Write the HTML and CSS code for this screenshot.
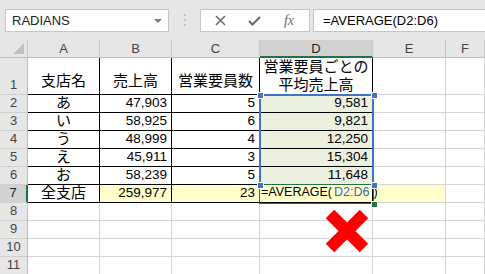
FILE: index.html
```html
<!DOCTYPE html>
<html lang="ja">
<head>
    <meta charset="UTF-8">
    <title>AVERAGE</title>
    <link rel="stylesheet" href="styles.css">
</head>
<body>
    <div class="toolbar">
        <div class="namebox"><span>RADIANS</span><span class="caret"></span></div>
        <div class="grip"><i></i><i></i><i></i></div>
        <div class="fbuttons">
            <span class="fbtn w1">
                <svg width="11" height="11" viewBox="0 0 11 11"><path d="M1 1L10 10M10 1L1 10" stroke="#6b6b6b" stroke-width="1.6" fill="none"/></svg>
            </span>
            <span class="fbtn w2">
                <svg width="13" height="10" viewBox="0 0 13 10"><path d="M1 5L4.5 8.5L12 1" stroke="#6b6b6b" stroke-width="2" fill="none"/></svg>
            </span>
            <span class="fbtn w3 fx">fx</span>
        </div>
        <div class="formula">=AVERAGE(D2:D6)</div>
    </div>

    <div class="sheet">
        <!-- column headers -->
        <div class="c h corner"><span class="tri"></span></div>
        <div class="c h">A</div>
        <div class="c h">B</div>
        <div class="c h">C</div>
        <div class="c h selcol">D</div>
        <div class="c h">E</div>
        <div class="c h">F</div>

        <!-- row 1 -->
        <div class="c rh">1</div>
        <div class="c bk mid">支店名</div>
        <div class="c bk mid">売上高</div>
        <div class="c bk mid">営業要員数</div>
        <div class="c bk wrap">営業要員ごとの<br>平均売上高</div>
        <div class="c"></div>
        <div class="c"></div>

        <div class="c rh">2</div>
        <div class="c bk ctr">あ</div>
        <div class="c bk n">47,903</div>
        <div class="c bk n">5</div>
        <div class="c bk n g">9,581</div>
        <div class="c"></div>
        <div class="c"></div>

        <div class="c rh">3</div>
        <div class="c bk ctr">い</div>
        <div class="c bk n">58,925</div>
        <div class="c bk n">6</div>
        <div class="c bk n g">9,821</div>
        <div class="c"></div>
        <div class="c"></div>

        <div class="c rh">4</div>
        <div class="c bk ctr">う</div>
        <div class="c bk n">48,999</div>
        <div class="c bk n">4</div>
        <div class="c bk n g">12,250</div>
        <div class="c"></div>
        <div class="c"></div>

        <div class="c rh">5</div>
        <div class="c bk ctr">え</div>
        <div class="c bk n">45,911</div>
        <div class="c bk n">3</div>
        <div class="c bk n g">15,304</div>
        <div class="c"></div>
        <div class="c"></div>

        <div class="c rh">6</div>
        <div class="c bk ctr">お</div>
        <div class="c bk n">58,239</div>
        <div class="c bk n">5</div>
        <div class="c bk n g">11,648</div>
        <div class="c"></div>
        <div class="c"></div>

        <div class="c rh selrow">7</div>
        <div class="c bk ctr">全支店</div>
        <div class="c bk n y">259,977</div>
        <div class="c bk n y">23</div>
        <div class="c bk y edit">=AVERAGE(<span class="ref">D2:D6</span>)<span class="cur"></span></div>
        <div class="c y"></div>
        <div class="c"></div>

        <div class="c rh">8</div>
        <div class="c"></div><div class="c"></div><div class="c"></div><div class="c"></div><div class="c"></div><div class="c"></div>
        <div class="c rh">9</div>
        <div class="c"></div><div class="c"></div><div class="c"></div><div class="c"></div><div class="c"></div><div class="c"></div>
        <div class="c rh">10</div>
        <div class="c"></div><div class="c"></div><div class="c"></div><div class="c"></div><div class="c"></div><div class="c"></div>
        <div class="c rh">11</div>
        <div class="c"></div><div class="c"></div><div class="c"></div><div class="c"></div><div class="c"></div><div class="c"></div>

        <!-- selection overlays -->
        <div class="range"></div>
        <div class="active"></div>
        <span class="handle blue hl ht"></span>
        <span class="handle blue hr ht"></span>
        <span class="handle blue hl hb"></span>
        <span class="handle blue hr hb"></span>
        <span class="handle green hr hf"></span>

        <svg class="cross" width="44" height="44" viewBox="0 0 44 44">
            <path d="M5 5L39 39M39 5L5 39" stroke="#ff0000" stroke-width="12" fill="none"/>
        </svg>
    </div>
</body>
</html>
```

FILE: styles.css
```css
body {
    margin: 0;
    background: #fff;
    font-family: "Liberation Sans", "Noto Sans CJK JP", sans-serif;
    color: #000;
    overflow: hidden;
}
.toolbar {
    display: flex;
    align-items: flex-start;
    height: 40px;
    box-sizing: border-box;
    padding: 9px 0 0 5px;
    background: #e6e6e6;
}
.namebox {
    width: 164px;
    height: 23px;
    box-sizing: border-box;
    border: 1px solid #c6c6c6;
    background: #fff;
    display: flex;
    align-items: center;
    justify-content: space-between;
    padding: 0 6px;
    font-size: 13px;
    color: #222;
}
.caret {
    border-left: 4px solid transparent;
    border-right: 4px solid transparent;
    border-top: 4px solid #7a7a7a;
}
.grip {
    width: 31px;
    display: flex;
    flex-direction: column;
    align-items: center;
    gap: 3px;
    padding-top: 5px;
}
.grip i {
    width: 2px;
    height: 2px;
    background: #c2c2c2;
}
.fbuttons {
    width: 110px;
    height: 23px;
    box-sizing: border-box;
    border: 1px solid #c6c6c6;
    background: #fff;
    display: flex;
    align-items: center;
}
.fbtn {
    display: flex;
    justify-content: center;
    align-items: center;
}
.w1 { width: 38px; }
.w2 { width: 30px; }
.w3 { width: 40px; }
.fx {
    font-family: "Liberation Serif", serif;
    font-style: italic;
    font-size: 14px;
    color: #6b6b6b;
}
.formula {
    flex: 1;
    margin-left: 3px;
    height: 23px;
    box-sizing: border-box;
    border: 1px solid #c6c6c6;
    border-right: none;
    background: #fff;
    padding-left: 9px;
    font-size: 13px;
    line-height: 21px;
}

.sheet {
    position: relative;
    display: grid;
    grid-template-columns: 28px 72px 72px 88px 113px 73px 1fr;
    grid-template-rows: 18px 37px repeat(10, 18px);
}
.c {
    box-sizing: border-box;
    border-right: 1px solid #d4d4d4;
    border-bottom: 1px solid #d4d4d4;
    padding: 0 4px 1px;
    font-size: 15px;
    line-height: 17px;
    white-space: nowrap;
    overflow: hidden;
    display: flex;
    align-items: flex-end;
}
.h {
    background: #e6e6e6;
    border-right-color: #c8c8c8;
    border-bottom-color: #bcbcbc;
    justify-content: center;
    align-items: center;
    font-size: 13px;
    color: #444;
    padding: 0;
}
.corner {
    justify-content: flex-end;
    align-items: flex-end;
    padding: 0 3px 3px 0;
}
.tri {
    width: 0;
    height: 0;
    border-left: 11px solid transparent;
    border-bottom: 11px solid #c0c0c0;
}
.selcol {
    background: #d2d2d2;
    border-bottom: 2px solid #217346;
    color: #222;
}
.rh {
    background: #e6e6e6;
    border-right-color: #bcbcbc;
    border-bottom-color: #cfcfcf;
    justify-content: center;
    font-size: 13px;
    color: #444;
    padding: 0 0 1px;
}
.selrow {
    background: #d2d2d2;
    border-right: 2px solid #217346;
    color: #222;
}
.bk {
    border-right-color: #000;
    border-bottom-color: #000;
}
.mid {
    justify-content: center;
    align-items: center;
    padding-top: 10px;
}
.ctr {
    justify-content: center;
}
.wrap {
    justify-content: center;
    text-align: center;
    line-height: 18px;
    padding-bottom: 0;
}
.n {
    justify-content: flex-end;
    font-size: 13.5px;
}
.g { background: #ebf1de; }
.y { background: #ffffcc; }
.edit {
    position: relative;
    z-index: 1;
    overflow: visible;
    font-size: 12.5px;
    padding-left: 1px;
}
.ref {
    color: #3a66b0;
    margin: 0 4px 0 2px;
}
.cur {
    display: inline-block;
    width: 1px;
    height: 15px;
    margin-left: 2px;
    background: #000;
}

.range {
    position: absolute;
    left: 259px;
    top: 54px;
    width: 115px;
    height: 92px;
    box-sizing: border-box;
    border: 2px solid #4472c4;
}
.active {
    position: absolute;
    left: 259px;
    top: 144px;
    width: 115px;
    height: 20px;
    box-sizing: border-box;
    border: 2px solid #217346;
    z-index: 0;
}
.handle {
    position: absolute;
    width: 5px;
    height: 5px;
    border: 1px solid #fff;
    z-index: 3;
}
.blue { background: #4472c4; }
.green { background: #217346; }
.hl { left: 257px; }
.hr { left: 371px; }
.ht { top: 52px; }
.hb { top: 142px; }
.hf { top: 161px; }
.cross {
    position: absolute;
    left: 325px;
    top: 169px;
}
```
